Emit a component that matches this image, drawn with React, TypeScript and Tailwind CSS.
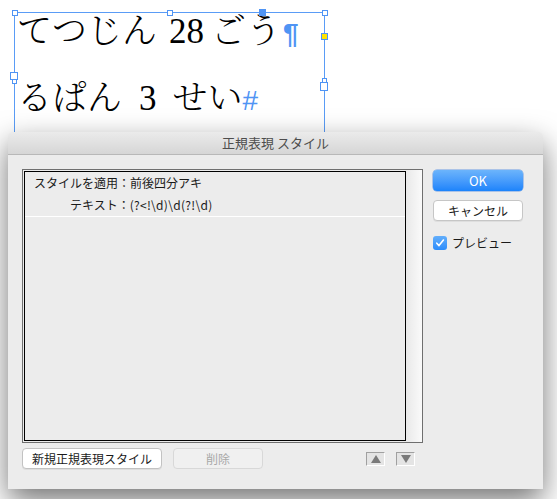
import React from "react";

const jp = { fontFamily: '"Noto Sans CJK JP", "Noto Sans", sans-serif' };

function Handle({ className }: { className: string }) {
  return <div className={`absolute border border-[#4f94f4] ${className}`} />;
}

function TextFrame() {
  return (
    <div className="relative ml-[14px] mt-[12px] h-[200px] w-[311px] border-l border-r border-t border-[#5a9cf6]">
      <Handle className="left-[-3px] top-[-3px] h-[6px] w-[6px] bg-white" />
      <Handle className="left-[152px] top-[-3px] h-[6px] w-[6px] bg-white" />
      <Handle className="left-[244px] top-[-4px] h-[7px] w-[7px] bg-[#4f94f4]" />
      <Handle className="left-[307px] top-[-3px] h-[6px] w-[6px] bg-white" />
      <Handle className="left-[306px] top-[20px] h-[7px] w-[7px] bg-[#ffe400]" />
      <Handle className="left-[-5px] top-[59px] h-[8px] w-[8px] bg-white" />
      <Handle className="left-[-3px] top-[66px] h-[5px] w-[5px] bg-white" />
      <Handle className="left-[307px] top-[65px] h-[5px] w-[5px] bg-white" />
      <Handle className="left-[305px] top-[69px] h-[9px] w-[8px] bg-white" />
      <div
        className="pl-[2px] text-[35px] font-light text-black"
        style={{ fontFamily: '"Liberation Serif", "Noto Serif CJK JP", "Noto Sans CJK JP", serif' }}
      >
        <div className="mt-[1px] h-[67px] whitespace-nowrap leading-[35px]">
          てつじん<span className="ml-[12px] mr-[7px]">28</span>ごう
          <span
            className="ml-[2px] text-[28px] font-bold text-[#4f94f4]"
            style={{ fontFamily: '"Liberation Sans", sans-serif' }}
          >
            ¶
          </span>
        </div>
        <div className="whitespace-nowrap leading-[35px]">
          るぱん<span className="ml-[17px] mr-[16px]">3</span>せい
          <span
            className="text-[28px] text-[#4f94f4]"
            style={{ fontFamily: '"Liberation Sans", sans-serif' }}
          >
            #
          </span>
        </div>
      </div>
    </div>
  );
}

function Dialog() {
  return (
    <div
      className="absolute left-[8px] top-[132px] flex h-[357px] w-[535px] flex-col rounded-t-[5px] bg-[#ececec] shadow-[0_12px_30px_rgba(0,0,0,0.55)]"
      style={jp}
    >
      <div className="flex h-[23px] items-center justify-center rounded-t-[5px] border-b border-[#b8b8b8] bg-gradient-to-b from-[#ebebeb] to-[#d6d6d6] text-[13px] text-[#4d4d4d]">
        正規表現 スタイル
      </div>
      <div className="flex px-[14px] pt-[14px]">
        <div className="flex w-[401px] flex-col">
          <div className="flex h-[274px] border border-[#6f6f6f] p-px">
            <div className="flex flex-1 flex-col border border-black text-[12px] text-[#1a1a1a]">
              <div className="flex h-[22px] items-center pl-[9px]">スタイルを適用：前後四分アキ</div>
              <div className="flex h-[23px] items-center border-b border-white pl-[45px]">
                テキスト：<span className="tracking-[0.3px]">(?&lt;!\d)\d(?!\d)</span>
              </div>
            </div>
            <div className="-my-px -mr-px w-[16px] bg-gradient-to-r from-[#e9e9e9] to-[#fafafa]" />
          </div>
          <div className="mt-[5px] flex h-[21px] items-center">
            <div className="flex h-[21px] w-[140px] items-center justify-center rounded-[4px] border border-[#c2c2c2] bg-white text-[12px] text-[#1a1a1a] shadow-[0_1px_0_rgba(0,0,0,0.06)]">
              新規正規表現スタイル
            </div>
            <div className="ml-[11px] flex h-[21px] w-[90px] items-center justify-center rounded-[4px] border border-[#d8d8d8] bg-[#f0f0f0] text-[12px] text-[#a8a8a8]">
              削除
            </div>
            <div className="ml-[103px] flex h-[14px] w-[19px] items-center justify-center border border-b-white border-l-[#a0a0a0] border-r-white border-t-[#a0a0a0] bg-[#e4e4e4]">
              <div className="h-0 w-0 border-b-[8px] border-l-[5px] border-r-[5px] border-b-[#7a7a7a] border-l-transparent border-r-transparent" />
            </div>
            <div className="ml-[11px] flex h-[14px] w-[19px] items-center justify-center border border-b-white border-l-[#a0a0a0] border-r-white border-t-[#a0a0a0] bg-[#e4e4e4]">
              <div className="h-0 w-0 border-l-[5px] border-r-[5px] border-t-[8px] border-l-transparent border-r-transparent border-t-[#7a7a7a]" />
            </div>
          </div>
        </div>
        <div className="ml-[10px] flex w-[90px] flex-col">
          <div className="mt-px flex h-[21px] items-center justify-center rounded-[4px] bg-gradient-to-b from-[#6cb4fb] to-[#1b83fb] text-[13px] text-white shadow-[0_0_0_0.5px_rgba(20,100,220,0.6)]">
            OK
          </div>
          <div className="mt-[9px] flex h-[21px] items-center justify-center rounded-[4px] border border-[#c6c6c6] bg-white text-[12px] text-[#1a1a1a] shadow-[0_1px_0_rgba(0,0,0,0.06)]">
            キャンセル
          </div>
          <div className="mt-[13px] flex items-center">
            <div className="flex h-[14px] w-[14px] items-center justify-center rounded-[3px] bg-gradient-to-b from-[#62aefb] to-[#2a8cfb]">
              <svg width="10" height="10" viewBox="0 0 10 10">
                <path d="M1.8 5.2 L4 7.6 L8.4 2" fill="none" stroke="white" strokeWidth="1.6" strokeLinecap="round" strokeLinejoin="round" />
              </svg>
            </div>
            <span className="ml-[5px] text-[12px] text-[#1a1a1a]">プレビュー</span>
          </div>
        </div>
      </div>
    </div>
  );
}

export default function App() {
  return (
    <div className="relative h-[499px] w-[557px] overflow-hidden bg-white">
      <TextFrame />
      <Dialog />
    </div>
  );
}
